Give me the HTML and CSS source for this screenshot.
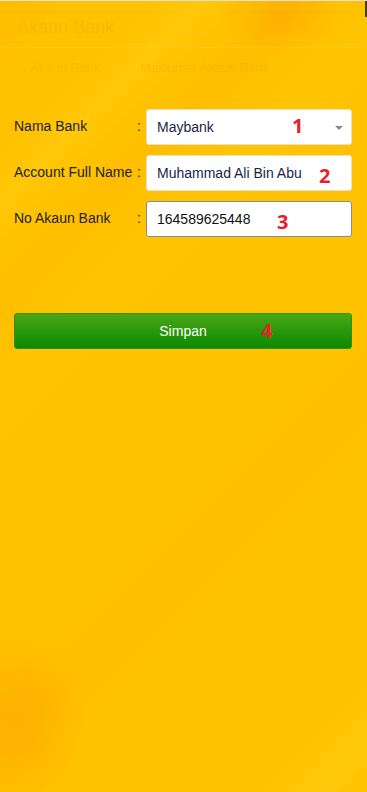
FILE: index.html
```html
<!DOCTYPE html>
<html lang="ms">
<head>
<meta charset="utf-8">
<title>Akaun Bank</title>
<link rel="stylesheet" href="styles.css">
</head>
<body>
<div class="page">
  <header class="header">
    <h1 class="title">Akaun Bank</h1>
  </header>
  <nav class="tabs">
    <span class="tab">Akaun Bank</span>
    <span class="tab">Maklumat Akaun Bank</span>
  </nav>
  <form class="form">
    <div class="row">
      <label class="label">Nama Bank</label>
      <span class="colon">:</span>
      <div class="field select">
        <span class="value navy">Maybank</span>
        <span class="arrow"></span>
        <span class="mark m1">1</span>
      </div>
    </div>
    <div class="row">
      <label class="label">Account Full Name</label>
      <span class="colon">:</span>
      <div class="field">
        <span class="value navy">Muhammad Ali Bin Abu</span>
        <span class="mark m2">2</span>
      </div>
    </div>
    <div class="row">
      <label class="label">No Akaun Bank</label>
      <span class="colon">:</span>
      <div class="field dark">
        <span class="value">164589625448</span>
        <span class="mark m3">3</span>
      </div>
    </div>
    <div class="btnwrap">
      <button type="button" class="btn">Simpan<span class="mark m4">4</span></button>
    </div>
  </form>
</div>
</body>
</html>
```
FILE: styles.css
```css
html {
  margin: 0;
  padding: 0;
  min-height: 100%;
  background-color: #ffc200;
  background-image:
    radial-gradient(ellipse 60px 40px at 280px 15px, rgba(255,160,0,0.45), rgba(255,160,0,0)),
    radial-gradient(ellipse 70px 90px at 15px 720px, rgba(255,160,0,0.5), rgba(255,160,0,0)),
    linear-gradient(135deg, rgba(255,165,0,0.2) 0px, rgba(255,165,0,0) 60px),
    linear-gradient(135deg, rgba(255,220,40,0) 110px, rgba(255,214,30,0.3) 145px, rgba(255,220,40,0) 175px),
    linear-gradient(135deg, rgba(255,150,0,0) 185px, rgba(255,165,0,0.18) 210px, rgba(255,150,0,0) 240px),
    linear-gradient(135deg, rgba(255,220,40,0) 250px, rgba(255,212,30,0.15) 285px, rgba(255,220,40,0) 320px),
    linear-gradient(135deg, rgba(255,150,0,0) 480px, rgba(255,165,0,0.15) 530px, rgba(255,150,0,0) 580px),
    linear-gradient(135deg, rgba(255,220,40,0) 740px, rgba(255,214,30,0.4) 785px, rgba(255,220,40,0) 820px);
  background-repeat: no-repeat;
  background-size: 367px 792px;
}
body {
  margin: 0;
  padding: 0;
  font-family: "Liberation Sans", Arial, sans-serif;
  border-top: 1px solid #e6e2d8;
}
.page {
  position: relative;
  min-height: 791px;
}
.page::after {
  content: "";
  position: absolute;
  right: 0;
  top: 0;
  width: 2px;
  height: 16px;
  background: #4a3a00;
}
.header {
  padding: 16px 17px 0;
  height: 30px;
  border-bottom: 1px solid rgba(255, 214, 60, 0.35);
}
.title {
  margin: 0;
  font-size: 18px;
  font-weight: normal;
  color: rgba(240, 175, 0, 0.45);
  line-height: 20px;
}
.tabs {
  display: flex;
  padding: 12px 0 0 30px;
  gap: 40px;
  height: 24px;
}
.tab {
  font-size: 13px;
  color: rgba(235, 170, 0, 0.35);
}
.form {
  padding: 25px 15px 0 14px;
}
.row {
  display: grid;
  grid-template-columns: 123px 9px 1fr;
  align-items: center;
  margin-bottom: 10px;
}
.label {
  font-size: 14px;
  color: #222;
  margin-top: -3px;
}
.colon {
  font-size: 14px;
  color: #222;
  margin-top: -3px;
}
.field {
  position: relative;
  height: 36px;
  background: #fff;
  border: 1px solid #e8e0c8;
  border-radius: 3px;
  box-sizing: border-box;
  display: flex;
  align-items: center;
  padding: 0 10px;
}
.field.dark {
  border-color: #8c8c8c;
}
.value {
  font-size: 14px;
  color: #111;
}
.value.navy {
  color: #1a1f4a;
}
.arrow {
  position: absolute;
  right: 8px;
  top: 16px;
  width: 0;
  height: 0;
  border-left: 4px solid transparent;
  border-right: 4px solid transparent;
  border-top: 4px solid #888;
}
.mark {
  position: absolute;
  font-family: "Open Sans", "Liberation Sans", sans-serif;
  font-weight: bold;
  font-size: 20px;
  line-height: 20px;
  color: #e8202c;
}
.m1 { left: 145px; top: 6px; }
.m2 { left: 172px; top: 10px; }
.m3 { left: 130px; top: 10px; }
.m4 { left: 246px; top: 7px; }
.btnwrap {
  padding-top: 66px;
}
.btn {
  position: relative;
  display: block;
  width: 100%;
  height: 36px;
  border: 1px solid #2f8f10;
  border-radius: 3px;
  background: linear-gradient(#4aa617, #0b8a00);
  color: #fff;
  font-family: "Liberation Sans", Arial, sans-serif;
  font-size: 14px;
  padding: 0;
  text-align: center;
}
```
